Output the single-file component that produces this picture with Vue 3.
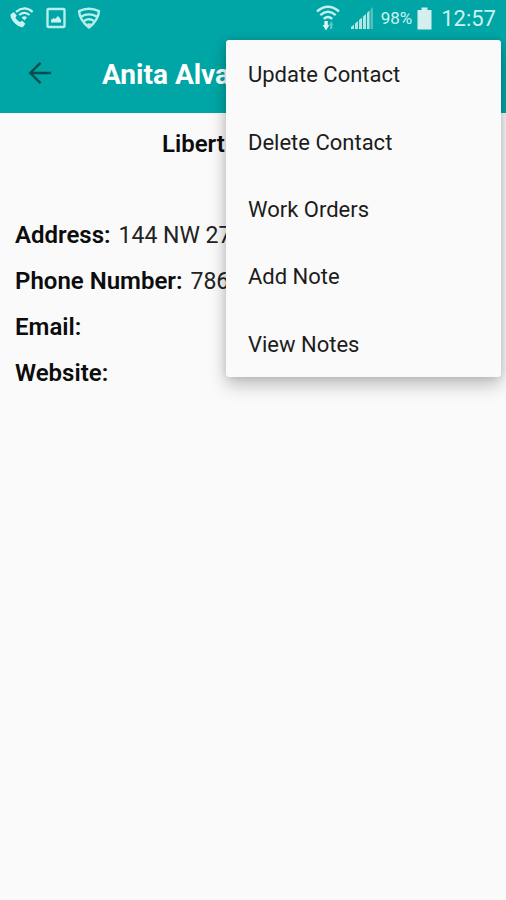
<script setup>
const actions = ['Update Contact', 'Delete Contact', 'Work Orders', 'Add Note', 'View Notes']
const fields = [
  { label: 'Address:', value: '144 NW 27' },
  { label: 'Phone Number:', value: '786' },
  { label: 'Email:', value: '' },
  { label: 'Website:', value: '' },
]
</script>

<template>
  <div class="screen">
    <div class="status">
      <div class="group notices">
        <svg width="26" height="24" viewBox="0 0 26 24" fill="none">
          <path d="M1.5 8.5 4.8 6 7.8 9.6 6.4 11.8Q8 14.6 10.8 16L13.2 14.8 16.4 17.8 14 21Q11 22 6.6 18 1.2 13 1.5 8.5Z" fill="#c8f3f1" />
          <path d="M7 5.8Q15.5-1 23.6 5.8M10.2 9Q15.5 4.6 20.6 9" stroke="#c8f3f1" stroke-width="2.2" />
          <path d="M12.6 11.4Q15.5 9 18 11.4L15.4 14.6Z" fill="#c8f3f1" />
        </svg>
        <svg width="20" height="22" viewBox="0 0 20 22" fill="none">
          <rect x="1.5" y="2" width="17" height="18" rx="1" stroke="#b5eeeb" stroke-width="2.4" />
          <path d="M5 15.5V12.8L8 11 9 12 12 9 15 12.8V15.5Z" fill="#c8f3f1" />
        </svg>
        <svg width="24" height="22" viewBox="0 0 24 22" fill="none" stroke="#b5eeeb" stroke-width="2.4">
          <path d="M2 4.2Q12-.6 22 4.2 21.2 13.5 12 20.5 2.8 13.5 2 4.2Z" stroke-linejoin="round" />
          <path d="M4 9.6Q12 5.2 20 9.6M7 14Q12 10.6 17 14" />
          <path d="M9.5 17Q12 15.5 14.5 17L12 19.5Z" fill="#b5eeeb" stroke="none" />
        </svg>
      </div>
      <div class="group">
        <svg class="wifi" width="24" height="26" viewBox="0 0 24 26" fill="none">
          <path d="M1 6.5Q12-3 23 6.5M4.3 10.2Q12 3.5 19.7 10.2M7.7 13.8Q12 10 16.3 13.8" stroke="#c4efed" stroke-width="2.4" />
          <path d="M8.4 16H11.8V20H13.4L10 25.4 6.6 20H8.4Z" fill="#d8f7f5" />
          <path d="M13 20 15.2 16.2 17.4 20H16.3V24H14.1V20Z" fill="#61c6c4" />
        </svg>
        <svg class="signal" width="24" height="24" viewBox="0 0 24 24">
          <path d="M1 23V21L4 18.5V23ZM5 23V17.5L8 15V23ZM9 23V14L12 11.5V23ZM13 23V10.5L16 8V23ZM17 23V7L19.5 4.5V23Z" fill="#b0e5e3" />
          <path d="M20.5 23V3.5L23 1V23Z" fill="#55bfbd" />
        </svg>
        <span class="percent">98%</span>
        <svg width="15" height="23" viewBox="0 0 15 23">
          <path d="M4.5 0.5H10.5V3H14.5V22.5H.5V3H4.5Z" fill="#d3f0ee" />
        </svg>
        <span class="time">12:57</span>
      </div>
    </div>

    <header class="bar">
      <button class="back" aria-label="Back">
        <svg width="24" height="24" viewBox="0 0 24 24" fill="none" stroke="#064e4d" stroke-width="2.4">
          <path d="M23 12H2.5M12.5 1.8 2.3 12 12.5 22.2" />
        </svg>
      </button>
      <h1>Anita Alva</h1>
    </header>

    <main>
      <h2>Libert</h2>
      <dl>
        <div v-for="f in fields" :key="f.label" class="field">
          <dt>{{ f.label }}</dt>
          <dd>{{ f.value }}</dd>
        </div>
      </dl>
    </main>

    <nav class="menu">
      <button v-for="a in actions" :key="a">{{ a }}</button>
    </nav>
  </div>
</template>

<style>
body {
  background: #fafafa;
}
</style>

<style scoped>
.screen {
  position: relative;
  min-height: 100vh;
  background: #fafafa;
  color: #0c0c0c;
  font-family: Roboto, sans-serif;
  overflow: hidden;
}
.status {
  display: flex;
  justify-content: space-between;
  align-items: center;
  height: 36px;
  padding: 0 10px 0 9px;
  background: #00a6a6;
  color: #cdf1ef;
}
.group {
  display: flex;
  align-items: center;
}
.notices {
  gap: 11px;
}
.wifi {
  margin-right: 10px;
}
.signal {
  margin-right: 7px;
}
.percent {
  margin-right: 5px;
  font-size: 17px;
}
.time {
  margin-left: 9px;
  font-size: 22px;
}
.bar {
  display: flex;
  align-items: center;
  gap: 50px;
  height: 77px;
  padding: 0 28px;
  background: #00a6a6;
}
.back {
  display: flex;
  padding: 0 0 3px;
  border: 0;
  background: none;
}
h1 {
  margin: 0;
  color: #fff;
  font-size: 28px;
  font-weight: 700;
  white-space: nowrap;
}
main {
  padding: 15px;
}
h2 {
  margin: 0 0 52px;
  padding-left: 147px;
  font-size: 24px;
  font-weight: 600;
  line-height: 32px;
}
dl {
  margin: 0;
}
.field {
  display: flex;
  align-items: center;
  gap: 8px;
  height: 46px;
}
dt {
  font-size: 24px;
  font-weight: 600;
}
dd {
  margin: 0;
  color: #222;
  font-size: 23px;
}
.menu {
  position: absolute;
  top: 40px;
  right: 5px;
  display: grid;
  grid-auto-rows: 1fr;
  width: 275px;
  height: 337px;
  border-radius: 3px;
  background: #fafafa;
  box-shadow: 0 8px 18px rgba(0, 0, 0, 0.24), 0 0 8px rgba(0, 0, 0, 0.12);
}
.menu button {
  padding: 2px 22px 0;
  border: 0;
  background: none;
  color: #1c1c1c;
  font-family: inherit;
  font-size: 22px;
  text-align: left;
}
</style>
